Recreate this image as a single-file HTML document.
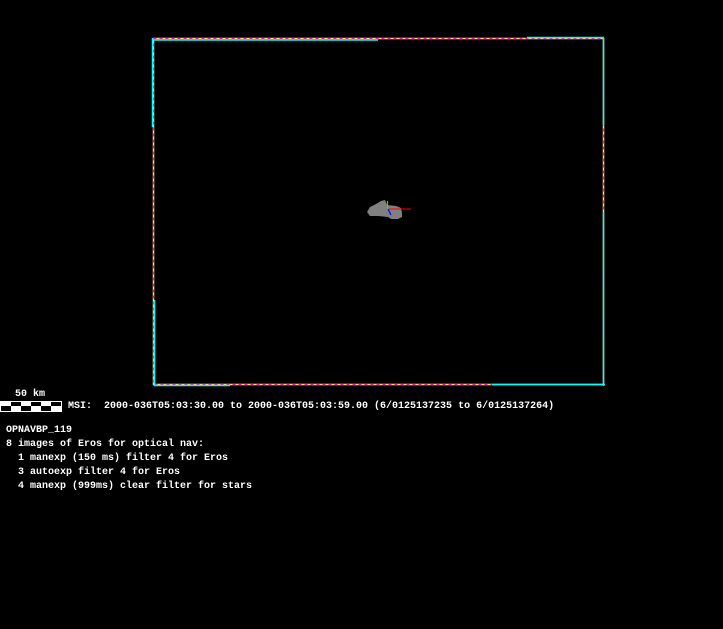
<!DOCTYPE html>
<html><head><style>
html,body{margin:0;padding:0;background:#000;width:723px;height:629px;overflow:hidden;position:relative}
.t{position:absolute;font-family:"Liberation Mono",monospace;font-size:10px;color:#fff;white-space:pre;line-height:14px;font-weight:bold}
</style></head><body>
<svg width="723" height="629" style="position:absolute;left:0;top:0">
<!-- dashed frame -->
<rect x="153.5" y="38.5" width="450" height="346" fill="none" stroke="#ff0" stroke-width="1.5"/>
<rect x="153.5" y="38.5" width="450" height="346" fill="none" stroke="#f0f" stroke-width="1.5" stroke-dasharray="3,3"/>
<!-- cyan segments -->
<line x1="153" y1="40" x2="378" y2="40" stroke="#0ff" stroke-width="1.5"/>
<line x1="527" y1="37.5" x2="604" y2="37.5" stroke="#0ff" stroke-width="1.5"/>
<line x1="152.5" y1="38" x2="152.5" y2="127" stroke="#0ff" stroke-width="1.5"/>
<line x1="154.5" y1="300" x2="154.5" y2="386" stroke="#0ff" stroke-width="1.5"/>
<line x1="603.5" y1="38" x2="603.5" y2="125" stroke="#0ff" stroke-width="1.5"/>
<line x1="603.5" y1="212" x2="603.5" y2="386" stroke="#0ff" stroke-width="1.5"/>
<line x1="154" y1="385.5" x2="230" y2="385.5" stroke="#0ff" stroke-width="1.5"/>
<line x1="492" y1="384.5" x2="605" y2="384.5" stroke="#0ff" stroke-width="1.5"/>
<!-- asteroid -->
<path d="M367,212 L370,207 L376,204 L381,201 L385,200 L387,205 L396,206 L401,208 L402,213 L402,217 L398,219 L391,219 L388,217 L378,216 L370,216 Z" fill="#808080"/>
<line x1="389" y1="209" x2="411" y2="209" stroke="#f00" stroke-width="1"/>
<line x1="387.5" y1="201" x2="387.5" y2="209" stroke="#0f0" stroke-width="1.2"/>
<line x1="388" y1="209" x2="391" y2="215" stroke="#00f" stroke-width="1.2"/>
<!-- scale bar -->
<rect x="0" y="401" width="62" height="11" fill="#fff"/>
<rect x="1" y="402" width="60" height="9" fill="#000"/>
<rect x="1" y="402" width="10" height="4" fill="#fff"/>
<rect x="21" y="402" width="10" height="4" fill="#fff"/>
<rect x="41" y="402" width="10" height="4" fill="#fff"/>
<rect x="11" y="406" width="10" height="5" fill="#fff"/>
<rect x="31" y="406" width="10" height="5" fill="#fff"/>
<rect x="51" y="406" width="10" height="5" fill="#fff"/>
</svg>
<div class="t" style="left:15px;top:388px">50 km</div>
<div class="t" style="left:68px;top:400px">MSI:  2000-036T05:03:30.00 to 2000-036T05:03:59.00 (6/0125137235 to 6/0125137264)</div>
<div class="t" style="left:6px;top:424px">OPNAVBP_119
8 images of Eros for optical nav:
  1 manexp (150 ms) filter 4 for Eros
  3 autoexp filter 4 for Eros
  4 manexp (999ms) clear filter for stars</div>
</body></html>
